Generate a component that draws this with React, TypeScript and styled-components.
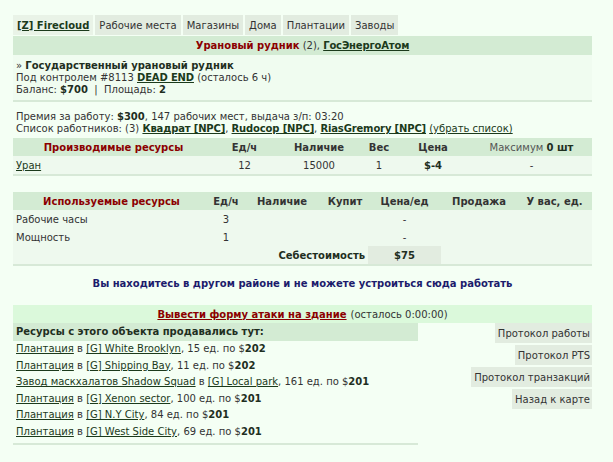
import styled, { createGlobalStyle } from 'styled-components';

const GlobalStyle = createGlobalStyle`
  html, body {
    margin: 0;
    padding: 0;
    background: #f4fff4;
  }
  body {
    font-family: "DejaVu Sans", Verdana, sans-serif;
    font-size: 10px;
    color: #333;
  }
`;

const Page = styled.div`
  width: 579px;
  margin: 15px 0 0 13px;
`;

const Tabs = styled.div`
  display: flex;
  gap: 2px;
  height: 20px;
  margin-bottom: 1px;
`;

const Tab = styled.a<{ $active?: boolean }>`
  display: flex;
  align-items: center;
  padding: 0 4px;
  background: ${(p) => (p.$active ? '#e9f3e7' : '#e2ece0')};
  color: ${(p) => (p.$active ? '#1b3a1b' : '#333')};
  font-weight: ${(p) => (p.$active ? 'bold' : 'normal')};
  text-decoration: ${(p) => (p.$active ? 'underline' : 'none')};
`;

const TitleBar = styled.div`
  height: 19px;
  background: #d3ebd3;
  display: flex;
  align-items: center;
  justify-content: center;
`;

const Red = styled.span`
  color: #8b0000;
  font-weight: bold;
`;

const StrongLink = styled.a`
  color: #1b3a1b;
  font-weight: bold;
  text-decoration: underline;
  letter-spacing: -0.15px;
`;

const Link = styled.a`
  color: #1b3a1b;
  text-decoration: underline;
`;

const B = styled.b`
  color: #1f2f1f;
`;

const InfoBlock = styled.div`
  background: #f0fcf0;
  padding: 5px 3px 4px;
  line-height: 12px;
  border-bottom: 2px solid #d7e9d7;
`;

const Plain = styled.div`
  padding: 9px 3px 3px;
  line-height: 12px;
`;

const Grid = styled.table`
  width: 579px;
  table-layout: fixed;
  border-collapse: collapse;
  border-bottom: 2px solid #d7e9d7;
  font-size: 10px;
`;

const Head = styled.th<{ $red?: boolean }>`
  background: #d3ebd3;
  height: 18px;
  padding: 0;
  text-align: center;
  font-weight: bold;
  color: ${(p) => (p.$red ? '#8b0000' : '#333')};
`;

const HeadNote = styled.th`
  background: #d3ebd3;
  padding: 0;
  font-weight: normal;
  color: #555;
`;

const Cell = styled.td<{ $left?: boolean; $shade?: boolean; $right?: boolean }>`
  height: 18px;
  padding: 0 3px;
  background: ${(p) => (p.$shade ? '#e2ece0' : '#eef9ee')};
  text-align: ${(p) => (p.$left ? 'left' : p.$right ? 'right' : 'center')};
`;

const Spacer = styled.div<{ $h: number }>`
  height: ${(p) => p.$h}px;
`;

const Notice = styled.div`
  text-align: center;
  color: #1c1c6c;
  font-weight: bold;
  line-height: 14px;
  padding: 11px 0 14px;
`;

const AttackBar = styled.div`
  height: 18px;
  background: #dbf9db;
  display: flex;
  align-items: center;
  justify-content: center;
  gap: 4px;
`;

const RedLink = styled.a`
  color: #8b0000;
  font-weight: bold;
  text-decoration: underline;
`;

const Bottom = styled.div`
  display: flex;
  align-items: flex-start;
`;

const SalesPanel = styled.div`
  width: 405px;
  border-bottom: 2px solid #d7e9d7;
  padding-bottom: 2px;
`;

const SalesHead = styled.div`
  background: #d3ebd3;
  height: 18px;
  line-height: 18px;
  padding: 0 3px;
  font-weight: bold;
  color: #1f2f1f;
`;

const SaleRow = styled.div`
  line-height: 16.6px;
  padding: 0 3px;
  white-space: nowrap;
`;

const Actions = styled.div`
  flex: 1;
  display: flex;
  flex-direction: column;
  align-items: flex-end;
  gap: 2px;
`;

const ActionButton = styled.a`
  height: 20px;
  display: flex;
  align-items: center;
  padding: 0 2px 0 3px;
  background: #e2ece0;
  color: #333;
`;

const sales = [
  { place: 'Плантация', city: '[G] White Brooklyn', qty: 15, price: 202 },
  { place: 'Плантация', city: '[G] Shipping Bay', qty: 11, price: 202 },
  { place: 'Завод маскхалатов Shadow Squad', city: '[G] Local park', qty: 161, price: 201 },
  { place: 'Плантация', city: '[G] Xenon sector', qty: 100, price: 201 },
  { place: 'Плантация', city: '[G] N.Y City', qty: 84, price: 201 },
  { place: 'Плантация', city: '[G] West Side City', qty: 69, price: 201 },
];

export default function App() {
  return (
    <Page>
      <GlobalStyle />
      <Tabs>
        <Tab $active>[Z] Firecloud</Tab>
        <Tab>Рабочие места</Tab>
        <Tab>Магазины</Tab>
        <Tab>Дома</Tab>
        <Tab>Плантации</Tab>
        <Tab>Заводы</Tab>
      </Tabs>
      <TitleBar>
        <Red>Урановый рудник</Red>&nbsp;(2),&nbsp;<StrongLink>ГосЭнергоАтом</StrongLink>
      </TitleBar>
      <InfoBlock>
        <div>
          » <B>Государственный урановый рудник</B>
        </div>
        <div>
          Под контролем #8113 <StrongLink>DEAD END</StrongLink> (осталось 6 ч)
        </div>
        <div>
          Баланс: <B>$700</B> &nbsp;|&nbsp; Площадь: <B>2</B>
        </div>
      </InfoBlock>
      <Plain>
        <div>
          Премия за работу: <B>$300</B>, 147 рабочих мест, выдача з/п: 03:20
        </div>
        <div>
          Список работников: (3) <StrongLink>Квадрат [NPC]</StrongLink>,{' '}
          <StrongLink>Rudocop [NPC]</StrongLink>, <StrongLink>RiasGremory [NPC]</StrongLink>{' '}
          <Link>(убрать список)</Link>
        </div>
      </Plain>
      <Grid>
        <colgroup>
          <col style={{ width: 201 }} />
          <col style={{ width: 61 }} />
          <col style={{ width: 88 }} />
          <col style={{ width: 32 }} />
          <col style={{ width: 76 }} />
          <col />
        </colgroup>
        <thead>
          <tr>
            <Head $red>Производимые ресурсы</Head>
            <Head>Ед/ч</Head>
            <Head>Наличие</Head>
            <Head>Вес</Head>
            <Head>Цена</Head>
            <HeadNote>
              Максимум <B>0 шт</B>
            </HeadNote>
          </tr>
        </thead>
        <tbody>
          <tr>
            <Cell $left>
              <Link>Уран</Link>
            </Cell>
            <Cell>12</Cell>
            <Cell>15000</Cell>
            <Cell>1</Cell>
            <Cell>
              <B>$-4</B>
            </Cell>
            <Cell>-</Cell>
          </tr>
        </tbody>
      </Grid>
      <Spacer $h={16} />
      <Grid>
        <colgroup>
          <col style={{ width: 197 }} />
          <col style={{ width: 32 }} />
          <col style={{ width: 80 }} />
          <col style={{ width: 46 }} />
          <col style={{ width: 73 }} />
          <col style={{ width: 76 }} />
          <col />
        </colgroup>
        <thead>
          <tr>
            <Head $red>Используемые ресурсы</Head>
            <Head>Ед/ч</Head>
            <Head>Наличие</Head>
            <Head>Купит</Head>
            <Head>Цена/ед</Head>
            <Head>Продажа</Head>
            <Head>У вас, ед.</Head>
          </tr>
        </thead>
        <tbody>
          <tr>
            <Cell $left>Рабочие часы</Cell>
            <Cell>3</Cell>
            <Cell />
            <Cell />
            <Cell>-</Cell>
            <Cell />
            <Cell />
          </tr>
          <tr>
            <Cell $left>Мощность</Cell>
            <Cell>1</Cell>
            <Cell />
            <Cell />
            <Cell>-</Cell>
            <Cell />
            <Cell />
          </tr>
          <tr>
            <Cell $right colSpan={4}>
              <B>Себестоимость</B>
            </Cell>
            <Cell $shade>
              <B>$75</B>
            </Cell>
            <Cell />
            <Cell />
          </tr>
        </tbody>
      </Grid>
      <Notice>Вы находитесь в другом районе и не можете устроиться сюда работать</Notice>
      <AttackBar>
        <RedLink>Вывести форму атаки на здание</RedLink>
        <span>(осталось 0:00:00)</span>
      </AttackBar>
      <Bottom>
        <SalesPanel>
          <SalesHead>Ресурсы с этого объекта продавались тут:</SalesHead>
          {sales.map((s) => (
            <SaleRow key={s.city}>
              <Link>{s.place}</Link> в <Link>{s.city}</Link>, {s.qty} ед. по $<B>{s.price}</B>
            </SaleRow>
          ))}
        </SalesPanel>
        <Actions>
          <ActionButton>Протокол работы</ActionButton>
          <ActionButton>Протокол PTS</ActionButton>
          <ActionButton>Протокол транзакций</ActionButton>
          <ActionButton>Назад к карте</ActionButton>
        </Actions>
      </Bottom>
    </Page>
  );
}
